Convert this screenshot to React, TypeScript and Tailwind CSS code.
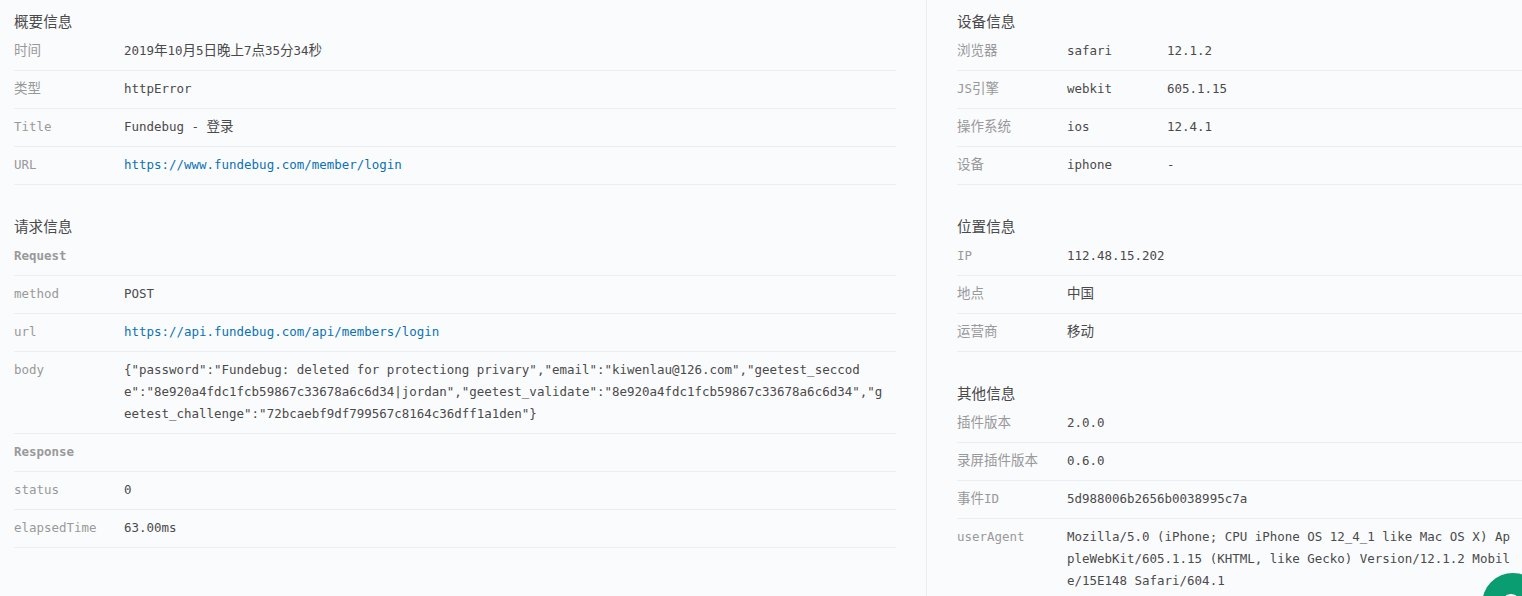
const mono = "font-['DejaVu_Sans_Mono','Noto_Sans_CJK_SC',monospace]";

type Row = { label: string; value?: string; extra?: string; link?: boolean; bold?: boolean };

// CJK glyphs sit a bit larger than the latin mono text
function Mixed({ text }: { text?: string }) {
    if (!text) return null;
    return (
        <>
            {text.split(/([\u4e00-\u9fff]+)/).map((part, i) =>
                i % 2 === 1 ? (
                    <span key={i} className="text-[13.5px] leading-none">{part}</span>
                ) : (
                    part
                ),
            )}
        </>
    );
}

function InfoRow({ row }: { row: Row }) {
    return (
        <div className="flex border-b border-[#eceef1] pt-[7px] pb-[8px] leading-[22px]">
            <div className={row.bold ? "w-[110px] shrink-0 font-bold text-[#999]" : "w-[110px] shrink-0 text-[#999]"}>
                <Mixed text={row.label} />
            </div>
            {row.extra !== undefined && <div className="w-[100px] shrink-0 text-[#4a4a4a]">{row.value}</div>}
            {row.extra !== undefined ? (
                <div className="text-[#4a4a4a]">{row.extra}</div>
            ) : row.link ? (
                <a href="#" className="text-[#0b72b5]">{row.value}</a>
            ) : (
                <div className="min-w-0 flex-1 break-all pr-[10px] text-[#4a4a4a]">
                    <Mixed text={row.value} />
                </div>
            )}
        </div>
    );
}

function Section({ title, rows }: { title: string; rows: Row[] }) {
    return (
        <section className="pb-[20px]">
            <h3 className="h-[33px] pt-[12px] text-[14.6px] leading-[20px] font-normal text-[#4a4a4a]">{title}</h3>
            {rows.map((row) => (
                <InfoRow key={row.label} row={row} />
            ))}
        </section>
    );
}

export default function App() {
    return (
        <main className={`flex h-screen overflow-hidden bg-[#fafbfd] text-[12.48px] ${mono}`}>
            <div className="w-[927px] shrink-0 border-r border-[#eceef1] pl-[14px] pr-[30px]">
                <Section
                    title="概要信息"
                    rows={[
                        { label: "时间", value: "2019年10月5日晚上7点35分34秒" },
                        { label: "类型", value: "httpError" },
                        { label: "Title", value: "Fundebug - 登录" },
                        { label: "URL", value: "https://www.fundebug.com/member/login", link: true },
                    ]}
                />
                <Section
                    title="请求信息"
                    rows={[
                        { label: "Request", bold: true },
                        { label: "method", value: "POST" },
                        { label: "url", value: "https://api.fundebug.com/api/members/login", link: true },
                        {
                            label: "body",
                            value: '{"password":"Fundebug: deleted for protectiong privary","email":"kiwenlau@126.com","geetest_seccode":"8e920a4fdc1fcb59867c33678a6c6d34|jordan","geetest_validate":"8e920a4fdc1fcb59867c33678a6c6d34","geetest_challenge":"72bcaebf9df799567c8164c36dff1a1den"}',
                        },
                        { label: "Response", bold: true },
                        { label: "status", value: "0" },
                        { label: "elapsedTime", value: "63.00ms" },
                    ]}
                />
            </div>
            <div className="min-w-0 flex-1 pl-[30px]">
                <Section
                    title="设备信息"
                    rows={[
                        { label: "浏览器", value: "safari", extra: "12.1.2" },
                        { label: "JS引擎", value: "webkit", extra: "605.1.15" },
                        { label: "操作系统", value: "ios", extra: "12.4.1" },
                        { label: "设备", value: "iphone", extra: "-" },
                    ]}
                />
                <Section
                    title="位置信息"
                    rows={[
                        { label: "IP", value: "112.48.15.202" },
                        { label: "地点", value: "中国" },
                        { label: "运营商", value: "移动" },
                    ]}
                />
                <Section
                    title="其他信息"
                    rows={[
                        { label: "插件版本", value: "2.0.0" },
                        { label: "录屏插件版本", value: "0.6.0" },
                        { label: "事件ID", value: "5d988006b2656b0038995c7a" },
                        {
                            label: "userAgent",
                            value: "Mozilla/5.0 (iPhone; CPU iPhone OS 12_4_1 like Mac OS X) AppleWebKit/605.1.15 (KHTML, like Gecko) Version/12.1.2 Mobile/15E148 Safari/604.1",
                        },
                    ]}
                />
            </div>
            <div className="fixed left-[1482px] top-[573px] h-[62px] w-[62px] rounded-full bg-[#0a9d72]">
                <div className="absolute left-[19px] top-[21px] h-[20px] w-[20px] rounded-full border-[3px] border-white" />
            </div>
        </main>
    );
}
